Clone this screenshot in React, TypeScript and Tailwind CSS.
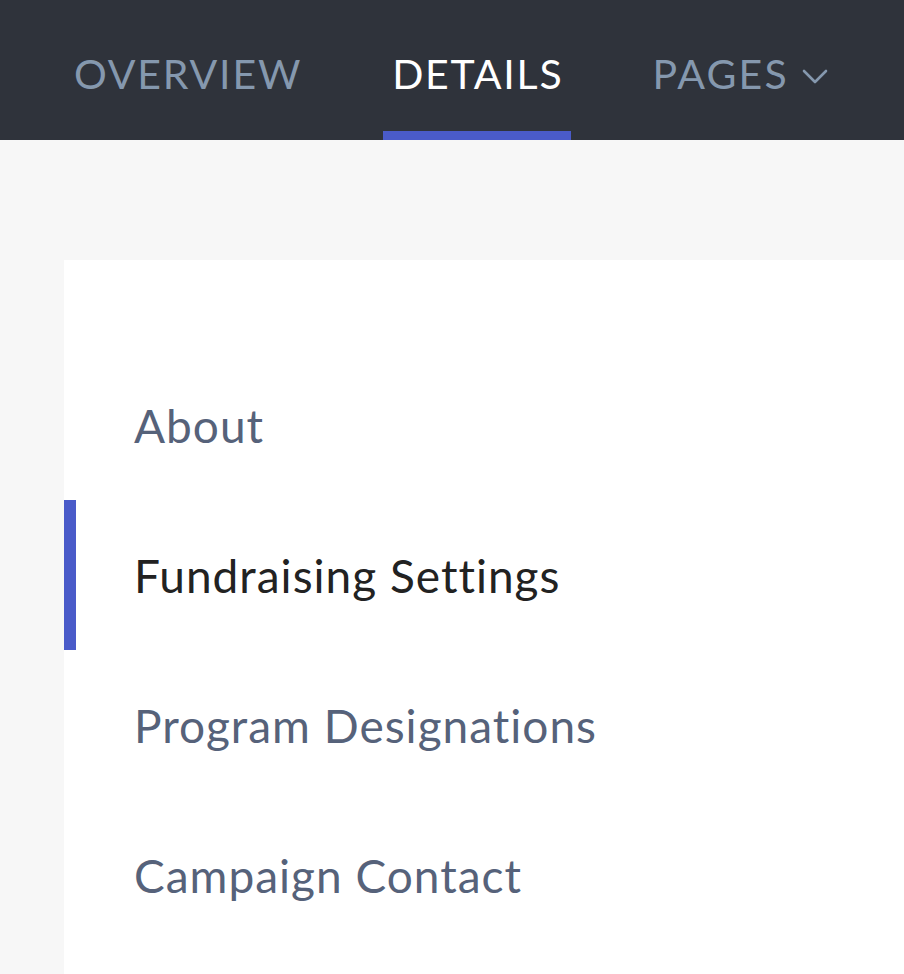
import React from "react";

const items = [
  { label: "About", active: false },
  { label: "Fundraising Settings", active: true },
  { label: "Program Designations", active: false },
  { label: "Campaign Contact", active: false },
];

export default function App() {
  return (
    <div className="w-[904px] h-[974px] overflow-hidden bg-[#f7f7f7] flex flex-col" style={{ fontFamily: "Lato, 'Noto Sans', sans-serif" }}>
      <nav className="h-[140px] shrink-0 bg-[#2f333b] flex items-stretch pl-[64px] gap-[71px]">
        <div className="px-[10px] flex items-center text-[41px] text-[#8598ae] tracking-[1.8px] border-b-[9px] border-transparent pt-[16px]">OVERVIEW</div>
        <div className="pl-[9px] pr-[8px] flex items-center text-[41px] text-white tracking-[1.8px] border-b-[9px] border-[#4a5bc9] pt-[16px]">DETAILS</div>
        <div className="px-[10px] flex items-center gap-[13px] text-[41px] text-[#8598ae] tracking-[2.2px] border-b-[9px] border-transparent pt-[16px]">
          PAGES
          <svg width="26" height="16" viewBox="0 0 26 16" fill="none" stroke="#8598ae" strokeWidth="2.6" strokeLinecap="round" strokeLinejoin="round" className="mt-[6px]">
            <path d="M2 2 L13 13 L24 2" />
          </svg>
        </div>
      </nav>
      <div className="flex-1 pt-[120px] pl-[64px]">
        <div className="bg-white h-full pt-[90px]">
          {items.map((it) => (
            <div key={it.label} className={`h-[150px] flex items-center pl-[58px] border-l-[12px] ${it.active ? "border-[#4a5bc9] text-[#222222]" : "border-transparent text-[#56627a]"}`}>
              <span className="text-[46px] tracking-[1px]">{it.label}</span>
            </div>
          ))}
        </div>
      </div>
    </div>
  );
}
